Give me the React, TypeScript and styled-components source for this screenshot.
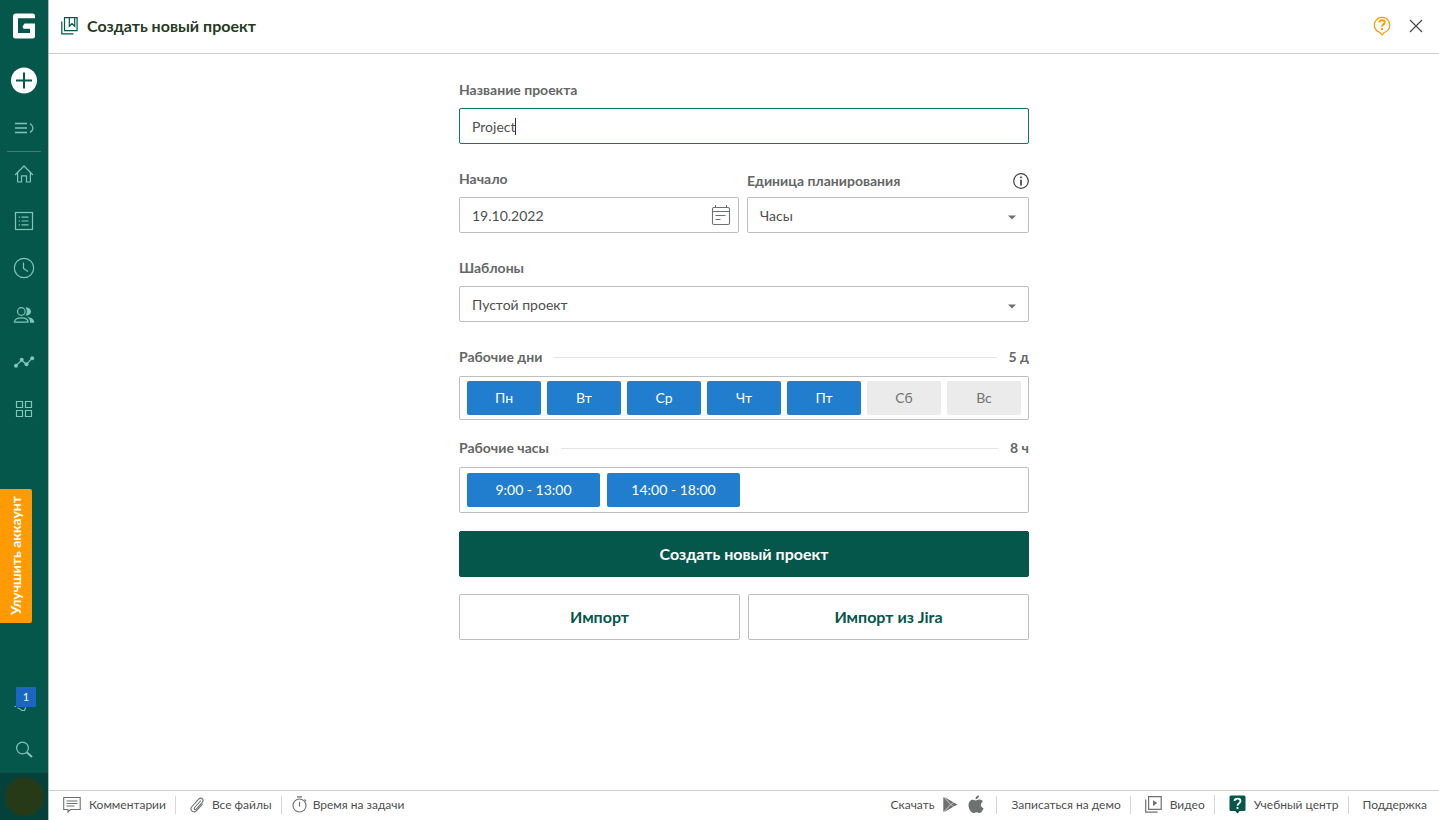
import React, { useState } from "react";
import styled, { createGlobalStyle } from "styled-components";

const color = {
  green: "#05564b",
  greenDark: "#04413a",
  mint: "#80c6bb",
  blue: "#217dcd",
  orange: "#ff9b00",
  border: "#bdbebe",
  label: "#646766",
  text: "#4d504f",
  icon: "#6d716f",
};

const GlobalStyle = createGlobalStyle`
  *, *::before, *::after { box-sizing: border-box; }
  html, body, #root { height: 100%; }
  body {
    margin: 0;
    background: #fff;
    color: ${color.text};
    font-family: Lato, "Liberation Sans", sans-serif;
    font-size: 14px;
  }
  button, input, select { font: inherit; color: inherit; }
  button { cursor: pointer; }
  svg { display: block; flex: none; }
`;

const Shell = styled.div`
  display: flex;
  min-height: 100%;
`;

const Sidebar = styled.nav`
  display: flex;
  flex-direction: column;
  flex: none;
  width: 49px;
  background: ${color.green};
  border-right: 1px solid #b4bbb9;
`;

const Logo = styled.a`
  display: grid;
  place-items: center;
  height: 52px;
  margin-bottom: 5px;
`;

const NavButton = styled.button`
  position: relative;
  display: grid;
  place-items: center;
  width: 48px;
  height: 47px;
  padding: 0;
  border: 0;
  background: none;
  color: ${color.mint};
`;

const NavGroup = styled.div<{ $last?: boolean }>`
  display: flex;
  flex-direction: column;
  ${(p) => p.$last && "margin-top: auto;"}
`;

const NavRule = styled.hr`
  width: 34px;
  height: 1px;
  margin: 0 auto -2px;
  border: 0;
  background: #3f8078;
`;

const Upgrade = styled.button`
  display: grid;
  place-items: center;
  width: 32px;
  height: 134px;
  margin-top: 57px;
  padding: 0;
  border: 0;
  border-radius: 0 2px 2px 0;
  background: ${color.orange};
  color: #fff;
  font-weight: 700;
`;

const UpgradeText = styled.span`
  writing-mode: vertical-rl;
  transform: rotate(180deg);
  line-height: 20px;
`;

const Badge = styled.span`
  position: absolute;
  top: 8px;
  left: 16px;
  width: 20px;
  border-radius: 1px;
  background: #1a66c2;
  color: #fff;
  font-size: 11px;
  line-height: 20px;
  text-align: center;
`;

const Account = styled.button`
  display: grid;
  place-items: center;
  width: 48px;
  height: 47px;
  padding: 0;
  border: 0;
  background: ${color.greenDark};
`;

const Avatar = styled.span`
  width: 39px;
  height: 39px;
  border-radius: 50%;
  background: #263a18;
`;

const Page = styled.div`
  display: flex;
  flex: 1;
  flex-direction: column;
  min-width: 0;
`;

const Header = styled.header`
  display: flex;
  align-items: center;
  height: 54px;
  padding: 0 16px 2px 12px;
  border-bottom: 1px solid #cbcccc;
`;

const Title = styled.h1`
  margin: 0 auto 0 9px;
  color: #263a1f;
  font-size: 16px;
  line-height: 20px;
`;

const IconButton = styled.button`
  display: grid;
  place-items: center;
  margin-left: 18px;
  padding: 0;
  border: 0;
  background: none;
`;

const Content = styled.main`
  flex: 1;
  padding: 26px 16px;
`;

const Form = styled.form`
  max-width: 570px;
  margin: 0 auto;
`;

const Row = styled.div<{ $columns?: string }>`
  display: grid;
  grid-template-columns: ${(p) => p.$columns ?? "1fr 1fr"};
  gap: 8px;
`;

const Field = styled.div`
  margin-bottom: 25px;
`;

const LabelRow = styled.div<{ $tall?: boolean }>`
  display: flex;
  align-items: center;
  justify-content: space-between;
  height: ${(p) => (p.$tall ? "24px" : "20px")};
  margin-bottom: ${(p) => (p.$tall ? "4px" : "8px")};
`;

const Label = styled.label`
  color: ${color.label};
  font-weight: 700;
  line-height: 20px;
`;

const Control = styled.div<{ $active?: boolean }>`
  position: relative;
  display: flex;
  align-items: center;
  height: 36px;
  border: 1px solid ${(p) => (p.$active ? "#157568" : color.border)};
  border-radius: 2px;
  background: #fff;
`;

const TextInput = styled.input`
  flex: 1;
  min-width: 0;
  height: 34px;
  padding: 0 0 0 12px;
  border: 0;
  outline: 0;
  background: none;
`;

const NameInput = styled(TextInput)`
  flex: none;
  max-width: 100%;
  field-sizing: content;
  caret-color: transparent;
`;

const Caret = styled.span`
  width: 1px;
  height: 17px;
  background: #333;
`;

const DateButton = styled(IconButton)`
  margin: 0 7px;
`;

const Select = styled.select`
  width: 100%;
  height: 34px;
  padding: 0 32px 0 12px;
  border: 0;
  outline: 0;
  appearance: none;
  background: none;
`;

const Arrow = styled.svg`
  position: absolute;
  right: 12px;
  top: 17px;
  pointer-events: none;
`;

const Section = styled.section`
  margin-bottom: 18px;
`;

const SectionHead = styled.div`
  display: flex;
  align-items: center;
  gap: 12px;
  margin-bottom: 9px;
  color: ${color.label};
  font-weight: 700;
  line-height: 20px;
`;

const SectionLine = styled.span`
  flex: 1;
  height: 1px;
  background: #e3e4e4;
`;

const ChipBox = styled.div<{ $kind: "days" | "hours" }>`
  display: grid;
  grid-template-columns: ${(p) => (p.$kind === "days" ? "repeat(7, 1fr)" : "133px 133px")};
  gap: ${(p) => (p.$kind === "days" ? "6px" : "7px")};
  padding: ${(p) => (p.$kind === "days" ? "4px 7px" : "5px 7px")};
  border: 1px solid ${color.border};
  border-radius: 2px;
`;

const Chip = styled.button<{ $on: boolean }>`
  height: 34px;
  padding: 0 0 1px;
  border: 0;
  border-radius: 2px;
  background: ${(p) => (p.$on ? color.blue : "#ebebeb")};
  color: ${(p) => (p.$on ? "#fff" : "#717473")};
`;

const Action = styled.button<{ $primary?: boolean }>`
  width: 100%;
  height: 46px;
  padding: 0 0 2px;
  border: 1px solid ${(p) => (p.$primary ? color.green : color.border)};
  border-radius: 2px;
  background: ${(p) => (p.$primary ? color.green : "#fff")};
  color: ${(p) => (p.$primary ? "#fff" : color.green)};
  font-size: 16px;
  font-weight: 700;
`;

const Actions = styled.div`
  display: grid;
  gap: 17px;
`;

const Footer = styled.footer`
  display: flex;
  align-items: center;
  justify-content: space-between;
  height: 30px;
  padding-bottom: 2px;
  border-top: 1px solid #cbcccc;
`;

const FooterList = styled.div`
  display: flex;
  align-items: center;
`;

const FooterItem = styled.div<{ $tight?: boolean }>`
  display: flex;
  align-items: center;
  gap: 9px;
  padding: 0 9px 0 ${(p) => (p.$tight ? "10px" : "14px")};
  font-size: 12px;
  line-height: 18px;
  & + & { border-left: 1px solid #d5d9d8; }
  &:last-child { padding-right: 12px; }
`;

const FooterLink = styled.a<{ $tight?: boolean }>`
  display: flex;
  align-items: center;
  gap: ${(p) => (p.$tight ? "6px" : "8px")};
  color: ${color.text};
  text-decoration: none;
`;

type IconProps = { w: number; h: number; stroke?: number; children: React.ReactNode };
const Icon = ({ w, h, stroke = 1, children }: IconProps) => (
  <svg
    width={w}
    height={h}
    viewBox={`0 0 ${w} ${h}`}
    fill="none"
    stroke="currentColor"
    strokeWidth={stroke}
    aria-hidden="true"
  >
    {children}
  </svg>
);

const SelectArrow = () => (
  <Arrow width="8" height="5" viewBox="0 0 8 5" aria-hidden="true">
    <path d="M0 .5h8L4 4.500z" fill={color.icon} />
  </Arrow>
);

const navItems = [
  {
    name: "Главная",
    icon: (
      <Icon w={20} h={20} stroke={1.2}>
        <path d="M1.500 10.500 10 2l8.500 8.500M3.600 8.800V18H7.500v-6.200h5V18h3.900V8.800" strokeLinejoin="round" strokeLinecap="round" />
      </Icon>
    ),
  },
  {
    name: "Задачи",
    icon: (
      <Icon w={20} h={20} stroke={1.2}>
        <rect x="1.500" y="1.500" width="17" height="17" />
        <path d="M7.500 6.200h7M7.500 10h7M7.500 13.800h7M4.800 6.200h1.200M4.800 10h1.200M4.800 13.800h1.200" />
      </Icon>
    ),
  },
  {
    name: "Время",
    icon: (
      <Icon w={22} h={22} stroke={1.2}>
        <circle cx="11" cy="11" r="9.700" />
        <path d="M10.500 5.500v6l4.500 3" />
      </Icon>
    ),
  },
  {
    name: "Команда",
    icon: (
      <Icon w={22} h={20} stroke={1.2}>
        <circle cx="8.300" cy="6.500" r="3.800" />
        <path d="M1.500 17.200c0-3.200 3-4.400 6.800-4.400s6.800 1.200 6.800 4.400z" />
        <path d="M12.400 2.600c3-.8 5.600 1.300 5.600 3.900s-2.600 4.700-5.600 3.900c2-2.400 2-5.400 0-7.800zM14.300 12.200c4.200.1 7 1.800 7 5.600h-4.200c0-2.600-.6-4.200-2.800-5.600z" fill="currentColor" stroke="none" />
      </Icon>
    ),
  },
  {
    name: "Отчёты",
    icon: (
      <Icon w={22} h={16} stroke={1.2}>
        <path d="m3 11.500 5.700-5.200 4.600 4 5.700-6" />
        <g fill="currentColor" stroke="none">
          <circle cx="3" cy="11.700" r="2" />
          <circle cx="8.700" cy="5.800" r="2" />
          <circle cx="13.500" cy="10.300" r="2" />
          <circle cx="19.200" cy="4.200" r="2" />
        </g>
      </Icon>
    ),
  },
  {
    name: "Приложения",
    icon: (
      <Icon w={18} h={18} stroke={1.2}>
        <path d="M1.500 1.500H7.500v6h-6zM10.500 1.500h6v6h-6zM1.500 10.500h6v6h-6zM10.500 10.500h6v6h-6z" />
      </Icon>
    ),
  },
];

const dayNames = ["Пн", "Вт", "Ср", "Чт", "Пт", "Сб", "Вс"];

export default function App() {
  const [name, setName] = useState("Project");
  const [date, setDate] = useState("19.10.2022");
  const [days, setDays] = useState([true, true, true, true, true, false, false]);
  const toggle = (i: number) => setDays(days.map((d, n) => (n === i ? !d : d)));

  return (
    <>
      <GlobalStyle />
      <Shell>
        <Sidebar>
          <Logo href="#" aria-label="На главную">
            <svg width="24" height="26" viewBox="0 0 24 26" aria-hidden="true">
              <path
                d="M4 0.500H20.500Q23 .500 23 3V5.200H6V20H18V15.800H11.500L10.500 13.400 12.500 10.500H23V23Q23 25.500 20.500 25.500H3.500Q1 25.500 1 23V3.500Q1 .500 4 .500z"
                fill="#fff"
              />
            </svg>
          </Logo>
          <NavButton aria-label="Создать">
            <svg width="26" height="27" viewBox="0 0 26 27" aria-hidden="true">
              <circle cx="13" cy="13.500" r="13" fill="#fff" />
              <path d="M13 5.500v16M5 13.500h16" stroke={color.green} strokeWidth="2" />
            </svg>
          </NavButton>
          <NavButton aria-label="Развернуть меню">
            <Icon w={20} h={12} stroke={1.300}>
              <path d="M1 1.500h12M1 6h12M1 10.500h12M16 1.500c4 3 4 6 0 9" />
            </Icon>
          </NavButton>
          <NavRule />
          <NavGroup>
            {navItems.map((item) => (
              <NavButton key={item.name} aria-label={item.name}>
                {item.icon}
              </NavButton>
            ))}
          </NavGroup>
          <Upgrade>
            <UpgradeText>Улучшить аккаунт</UpgradeText>
          </Upgrade>
          <NavGroup $last>
            <NavButton aria-label="Уведомления">
              <Icon w={20} h={20} stroke={1.2}>
                <path d="M.500 13.500h1.500M3.500 15c2 .5 3.500 1 4.500 2.500M7.500 17.500h3l1.200-3" />
              </Icon>
              <Badge>1</Badge>
            </NavButton>
            <NavButton aria-label="Поиск">
              <Icon w={18} h={18} stroke={1.2}>
                <circle cx="7.500" cy="7" r="5.900" />
                <path d="m12 11.500 5 4.500" strokeWidth="2" />
              </Icon>
            </NavButton>
            <Account aria-label="Профиль">
              <Avatar />
            </Account>
          </NavGroup>
        </Sidebar>

        <Page>
          <Header>
            <svg width="17" height="18" viewBox="0 0 17 18" fill="none" stroke={color.green} strokeWidth="1.200" aria-hidden="true">
              <path d="M3.500 .600h12.600v13H3.500zM.800 4.500v12.300H12.500M8.300 .600v8.700l2.700-2.600 2.700 2.600V.600" />
            </svg>
            <Title>Создать новый проект</Title>
            <IconButton aria-label="Помощь">
              <svg width="18" height="20" viewBox="0 0 18 20" fill="none" stroke={color.orange} aria-hidden="true">
                <path d="M6.800 16.500a7.700 7.700 0 1 1 4.200.1L9.300 19z" strokeWidth="1.200" strokeLinejoin="round" />
                <path d="M6.500 6.500c.2-3 5.200-2.900 5.200 0 0 2-2.700 2-2.700 4.200M9 12v2" strokeWidth="1.900" />
              </svg>
            </IconButton>
            <IconButton aria-label="Закрыть">
              <svg width="14" height="14" viewBox="0 0 14 14" stroke="#444746" strokeWidth="1.200" aria-hidden="true">
                <path d="m1 1 12 12M13 1 1 13" />
              </svg>
            </IconButton>
          </Header>

          <Content>
            <Form onSubmit={(e) => e.preventDefault()}>
              <Field>
                <LabelRow>
                  <Label htmlFor="name">Название проекта</Label>
                </LabelRow>
                <Control $active>
                  <NameInput id="name" value={name} onChange={(e) => setName(e.target.value)} />
                  <Caret />
                </Control>
              </Field>

              <Row $columns="280fr 282fr">
                <Field>
                  <LabelRow>
                    <Label htmlFor="start">Начало</Label>
                  </LabelRow>
                  <Control>
                    <TextInput id="start" value={date} onChange={(e) => setDate(e.target.value)} />
                    <DateButton type="button" aria-label="Выбрать дату">
                      <svg width="20" height="22" viewBox="0 0 20 22" fill="none" stroke={color.icon} strokeWidth="1.100" aria-hidden="true">
                        <rect x="1.500" y="3.500" width="17" height="17" rx="1.500" />
                        <path d="M1.500 7.500h17M4.500 1v3M15.500 1v3M4.500 11.500h10M4.500 15.500h5" />
                      </svg>
                    </DateButton>
                  </Control>
                </Field>
                <Field>
                  <LabelRow $tall>
                    <Label htmlFor="unit">Единица планирования</Label>
                    <svg width="16" height="16" viewBox="0 0 16 16" fill="none" stroke="#3f4241" aria-hidden="true">
                      <circle cx="8" cy="8" r="7.300" strokeWidth="1.200" />
                      <path d="M8 3.500v1.700M8 6.800v5.700" strokeWidth="1.700" />
                    </svg>
                  </LabelRow>
                  <Control>
                    <Select id="unit">
                      <option>Часы</option>
                      <option>Дни</option>
                    </Select>
                    <SelectArrow />
                  </Control>
                </Field>
              </Row>

              <Field>
                <LabelRow>
                  <Label htmlFor="template">Шаблоны</Label>
                </LabelRow>
                <Control>
                  <Select id="template">
                    <option>Пустой проект</option>
                  </Select>
                  <SelectArrow />
                </Control>
              </Field>

              <Section>
                <SectionHead>
                  <span>Рабочие дни</span>
                  <SectionLine />
                  <span>{days.filter(Boolean).length} д</span>
                </SectionHead>
                <ChipBox $kind="days">
                  {dayNames.map((day, i) => (
                    <Chip key={day} type="button" $on={days[i]} aria-pressed={days[i]} onClick={() => toggle(i)}>
                      {day}
                    </Chip>
                  ))}
                </ChipBox>
              </Section>

              <Section>
                <SectionHead>
                  <span>Рабочие часы</span>
                  <SectionLine />
                  <span>8 ч</span>
                </SectionHead>
                <ChipBox $kind="hours">
                  <Chip type="button" $on>9:00 - 13:00</Chip>
                  <Chip type="button" $on>14:00 - 18:00</Chip>
                </ChipBox>
              </Section>

              <Actions>
                <Action type="submit" $primary>Создать новый проект</Action>
                <Row>
                  <Action type="button">Импорт</Action>
                  <Action type="button">Импорт из Jira</Action>
                </Row>
              </Actions>
            </Form>
          </Content>

          <Footer>
            <FooterList>
              <FooterItem>
                <FooterLink href="#">
                  <svg width="18" height="17" viewBox="0 0 18 17" fill="none" stroke={color.icon} strokeWidth="1.100" aria-hidden="true">
                    <path d="M.700 1.500h16.500v12H7.500L5 16v-2.500H.700zM3.500 5h11M3.500 7.500h11M3.500 10h8" />
                  </svg>
                  Комментарии
                </FooterLink>
              </FooterItem>
              <FooterItem>
                <FooterLink href="#">
                  <svg width="14" height="16" viewBox="0 0 14 16" fill="none" stroke={color.icon} strokeWidth="1.100" strokeLinecap="round" aria-hidden="true">
                    <path d="M10.500 4 4.600 10.500c-1.200 1.400.5 2.800 1.700 1.500l6-6.700c2.200-2.700-1.200-5.700-3.600-3.200L2 9.500c-3 3.600 1.500 7.400 4.500 4.200l5.800-6.400" />
                  </svg>
                  Все файлы
                </FooterLink>
              </FooterItem>
              <FooterItem $tight>
                <FooterLink href="#" $tight>
                  <svg width="15" height="17" viewBox="0 0 15 17" fill="none" stroke={color.icon} strokeWidth="1.100" aria-hidden="true">
                    <circle cx="7.500" cy="9.500" r="6.500" />
                    <path d="M5 .900h5M7.500 6v4.500M12.500 3.500l1.500 1.500" />
                  </svg>
                  Время на задачи
                </FooterLink>
              </FooterItem>
            </FooterList>

            <FooterList>
              <FooterItem>
                <FooterLink href="#">
                  Скачать
                  <svg width="17" height="17" viewBox="0 0 17 17" fill={color.icon} aria-hidden="true">
                    <path d="M1.300 1 8 8.500 1.300 16zM2.800 1.300l8.400 4.900-2.500 1.900zM2.800 15.700l8.400-4.900-2.500-1.900zM12 6.700l3.500 1.800-3.500 1.800-2.600-1.800z" />
                    <path d="M2 1 15.500 8.500 2 16z" opacity=".45" />
                  </svg>
                </FooterLink>
                <FooterLink href="#" aria-label="App Store">
                  <svg width="19" height="19" viewBox="0 0 19 19" fill={color.icon} aria-hidden="true">
                    <path d="M11 .300c.2 2.200-1.600 4.100-3.500 4C7.300 2.300 9 .500 11 .300zM7.900 5.600c.8 0 1.900-1 3.500-1 1.300 0 2.600.6 3.500 1.800-2.800 1.700-2.500 5.700.7 6.900-.7 2-2.200 4.700-3.900 4.700-1.200 0-1.600-.8-3.100-.8s-2 .8-3.100.8C3.200 18 .500 13.800.500 10.200c0-3.500 2.200-5.500 4.400-5.500 1.400 0 2.400.9 3 .9z" />
                  </svg>
                </FooterLink>
              </FooterItem>
              <FooterItem>
                <FooterLink href="#">Записаться на демо</FooterLink>
              </FooterItem>
              <FooterItem>
                <FooterLink href="#">
                  <svg width="17" height="17" viewBox="0 0 17 17" fill="none" stroke={color.icon} strokeWidth="1.200" aria-hidden="true">
                    <path d="M3.600 .700h12.600v12.600H3.600zM.700 3.500v12.700h12" />
                    <path d="m8 4.200 4.300 2.900L8 10z" fill={color.icon} stroke="none" />
                  </svg>
                  Видео
                </FooterLink>
              </FooterItem>
              <FooterItem $tight={false}>
                <FooterLink href="#">
                  <svg width="17" height="19" viewBox="0 0 17 19" fill="none" aria-hidden="true">
                    <path d="M2 .500h13q1.500 0 1.500 1.500v12.500q0 1.500-1.500 1.500h-4.200L8.500 18.500 6.200 16H2Q.500 16 .500 14.500V2Q.500 .500 2 .500z" fill={color.green} />
                    <path d="M5.500 6c.2-3.300 6-3.200 6 0 0 2.200-3 2.200-3 4.700M8.500 12v2" stroke="#fff" strokeWidth="1.800" />
                  </svg>
                  Учебный центр
                </FooterLink>
              </FooterItem>
              <FooterItem>
                <FooterLink href="#">Поддержка</FooterLink>
              </FooterItem>
            </FooterList>
          </Footer>
        </Page>
      </Shell>
    </>
  );
}
